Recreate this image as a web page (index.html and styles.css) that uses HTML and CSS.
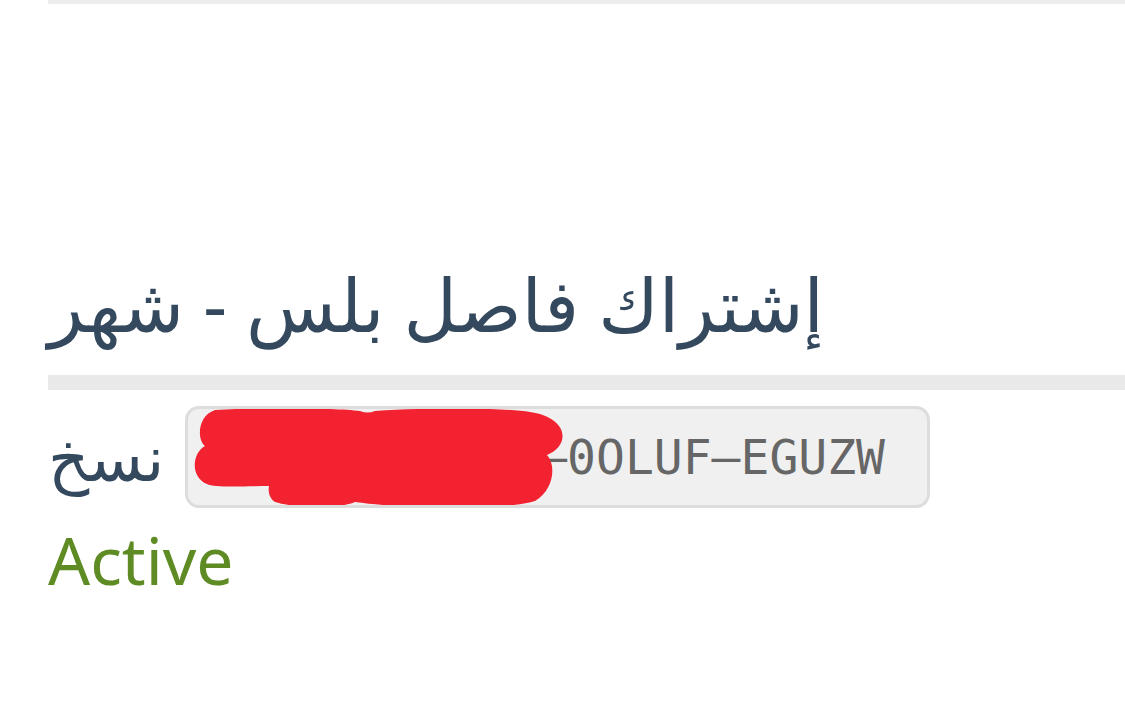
FILE: index.html
```html
<!DOCTYPE html>
<html lang="ar">
<head>
<meta charset="utf-8">
<link rel="stylesheet" href="styles.css">
</head>
<body>
<div class="page">
  <div class="top-bar"></div>
  <h2 class="title">إشتراك فاصل بلس - شهر</h2>
  <div class="divider"></div>
  <div class="copy-row">
    <span class="copy-label">نسخ</span>
    <div class="code-field">
      <span class="code-text">XXXXX–XXXXX–0OLUF–EGUZW</span>
      <svg class="redact" width="400" height="110" viewBox="0 0 400 110">
        <path fill="#f32230" d="M 30 4 C 80 1, 150 2, 175 5 C 180 7, 185 7, 190 5 C 250 1, 320 2, 345 6 C 385 12, 385 40, 362 49 C 372 60, 368 85, 350 95 C 320 104, 230 104, 170 96 C 150 104, 110 102, 90 96 C 84 92, 83 85, 84 80 C 60 80, 30 82, 22 78 C 6 72, 6 48, 20 40 C 12 34, 12 10, 30 4 Z"/>
      </svg>
    </div>
  </div>
  <div class="status">Active</div>
</div>
</body>
</html>
```
FILE: styles.css
```css
html, body {
  margin: 0;
  padding: 0;
  background: #ffffff;
}
.page {
  padding-left: 48px;
  font-family: "Noto Sans", "DejaVu Sans", sans-serif;
}
.top-bar {
  height: 4px;
  background: #ececec;
}
.title {
  margin: 258px 0 0 0;
  font-size: 73.5px;
  font-weight: 400;
  line-height: 84px;
  color: #34495e;
  text-align: left;
}
.divider {
  margin-top: 29px;
  height: 15px;
  background: #e9e9e9;
}
.copy-row {
  margin-top: 16px;
  display: flex;
  align-items: center;
  gap: 20px;
}
.copy-label {
  font-size: 64px;
  line-height: 80px;
  color: #34495e;
  width: 117px;
  white-space: nowrap;
}
.code-field {
  position: relative;
  box-sizing: border-box;
  width: 745px;
  height: 102px;
  border: 3px solid #dddddd;
  border-radius: 14px;
  background: #f0f0f0;
  display: flex;
  align-items: center;
  justify-content: flex-end;
  padding-right: 42px;
  overflow: hidden;
}
.code-text {
  font-family: "DejaVu Sans Mono", monospace;
  font-size: 48px;
  color: #666666;
  white-space: nowrap;
}
.redact {
  position: absolute;
  left: -3px;
  top: -3px;
}
.status {
  margin-top: 13px;
  font-size: 66px;
  line-height: 77px;
  color: #5f8b24;
}
```
